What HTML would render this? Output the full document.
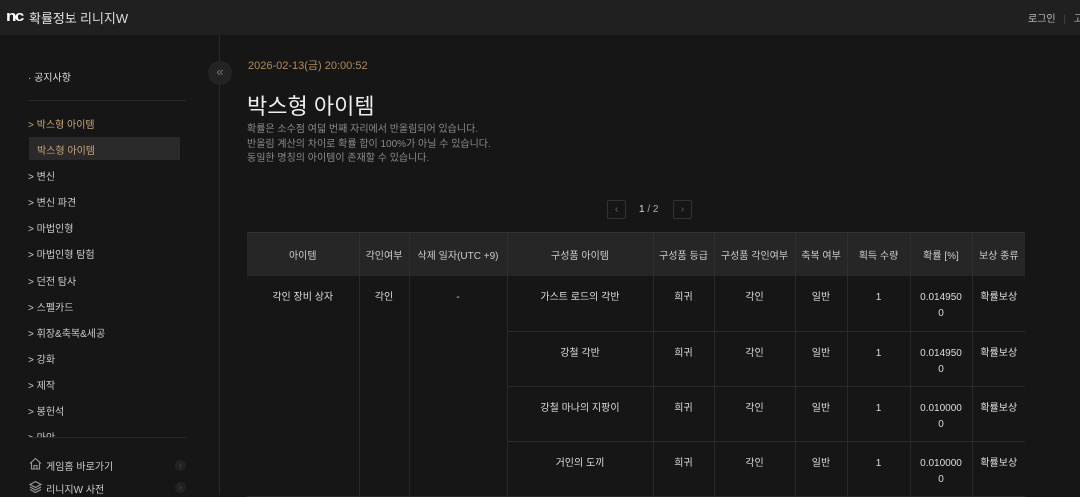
<!DOCTYPE html>
<html><head><meta charset="utf-8">
<style>
*{margin:0;padding:0;box-sizing:border-box}
body{width:1080px;height:495px;overflow:hidden;background:#161616;font-family:"Liberation Sans","Noto Sans CJK KR",sans-serif;color:#ccc;position:relative}
.top{position:absolute;left:0;top:0;width:1080px;height:35px;background:#202020}
.logo{position:absolute;left:6px;top:9px;font-weight:bold;font-size:15px;color:#fff;letter-spacing:-1.5px;line-height:15px;font-family:"Liberation Sans",sans-serif;transform:scaleX(1.15);transform-origin:left}
.t1{position:absolute;left:29px;top:8px;font-size:13px;color:#e6e6e6;white-space:nowrap}
.sep{position:absolute;left:74px;top:12px;width:1px;height:10px;background:#555}
.t2{position:absolute;left:80px;top:8px;font-size:13px;color:#ddd;white-space:nowrap}
.login{position:absolute;left:1028px;top:10px;font-size:10px;color:#bbb;white-space:nowrap}
.side{position:absolute;left:0;top:35px;width:220px;height:460px;border-right:1px solid #2a2a2a}
.side .it{position:absolute;left:28px;font-size:10px;color:#ccc;white-space:nowrap}
.side .hl{color:#c9a47a}
.sel{position:absolute;left:29px;top:102px;width:151px;height:23px;background:#2a2a2a;color:#c9a47a;font-size:10px;padding:5px 0 0 8px}
.hr{position:absolute;left:29px;width:157px;height:1px;background:#2a2a2a}
.coll{position:absolute;left:208px;top:61px;width:24px;height:24px;border-radius:50%;background:#232323;color:#777;font-size:13px;text-align:center;line-height:22px}
.date{position:absolute;left:248px;top:57px;font-size:11px;color:#b08a60}
h1{position:absolute;left:247px;top:89px;font-size:22px;font-weight:normal;color:#eee}
.note{position:absolute;left:247px;top:123px;font-size:10px;line-height:14.5px;color:#8a8a8a}
.pg{position:absolute;top:200px;width:19px;height:19px;border:1px solid #333;border-radius:2px;color:#666;font-size:10px;text-align:center;line-height:17px}
.pn{position:absolute;left:639px;top:204px;font-size:10px;color:#aaa}
table{position:absolute;left:247px;top:233px;border-collapse:collapse;font-size:10px;color:#ddd;table-layout:fixed}
th{background:#262626;height:43px;font-weight:normal;color:#ccc;border-left:1px solid #2e2e2e}
td{height:55px;text-align:center;vertical-align:top;padding-top:14px;border-left:1px solid #2a2a2a;border-bottom:1px solid #2a2a2a;line-height:16px}
th:first-child,td.f{border-left:none}
.tl{position:absolute;left:247px;top:232px;width:778px;height:2px;background:#333}
</style></head><body>
<div class="top">
<div class="logo">nc</div><div class="t1">확률정보</div><div class="sep"></div><div class="t2">리니지W</div>
<div class="login">로그인 <span style="color:#444;margin:0 5px">|</span> 고객</div>
</div>
<div class="side">
<div class="it" style="top:34px;color:#ddd">· 공지사항</div>
<div class="hr" style="top:65px"></div>
<div class="it hl" style="top:81px">&gt; 박스형 아이템</div>
<div class="sel">박스형 아이템</div>
<div class="it" style="top:133px">&gt; 변신</div>
<div class="it" style="top:159px">&gt; 변신 파견</div>
<div class="it" style="top:185px">&gt; 마법인형</div>
<div class="it" style="top:211px">&gt; 마법인형 탐험</div>
<div class="it" style="top:238px">&gt; 던전 탐사</div>
<div class="it" style="top:264px">&gt; 스펠카드</div>
<div class="it" style="top:290px">&gt; 휘장&amp;축복&amp;세공</div>
<div class="it" style="top:316px">&gt; 강화</div>
<div class="it" style="top:342px">&gt; 제작</div>
<div class="it" style="top:368px">&gt; 봉헌석</div>
<div class="it" style="top:394px;height:9px;overflow:hidden">&gt; 마안</div>
<div class="hr" style="top:402px"></div>
<svg style="position:absolute;left:29px;top:422px" width="13" height="13" viewBox="0 0 13 13" fill="none" stroke="#999" stroke-width="1.1"><path d="M1 6.5L6.5 1.5L12 6.5M2.5 5.5V12H10.5V5.5M5 12V8.5H8V12"/></svg>
<div class="it" style="top:423px;left:46px">게임홈 바로가기</div>
<div style="position:absolute;left:175px;top:425px;width:11px;height:11px;border-radius:50%;background:#222;color:#555;font-size:8px;text-align:center;line-height:11px">›</div>
<svg style="position:absolute;left:29px;top:445px" width="13" height="13" viewBox="0 0 13 13" fill="none" stroke="#999" stroke-width="1.1"><path d="M1 4.5L6.5 1.5L12 4.5L6.5 7.5Z M1 7L6.5 10L12 7 M1 9.5L6.5 12.5L12 9.5"/></svg>
<div class="it" style="top:446px;left:46px">리니지W 사전</div>
<div style="position:absolute;left:175px;top:447px;width:11px;height:11px;border-radius:50%;background:#222;color:#555;font-size:8px;text-align:center;line-height:11px">›</div>
</div>
<div class="coll">«</div>
<div class="date">2026-02-13(금) 20:00:52</div>
<h1>박스형 아이템</h1>
<div class="note">확률은 소수점 여덟 번째 자리에서 반올림되어 있습니다.<br>반올림 계산의 차이로 확률 합이 100%가 아닐 수 있습니다.<br>동일한 명칭의 아이템이 존재할 수 있습니다.</div>
<div class="pg" style="left:607px">‹</div>
<div class="pn"><b style="color:#ddd;font-weight:normal">1</b> / 2</div>
<div class="pg" style="left:673px">›</div>
<div class="tl"></div>
<table>
<colgroup><col style="width:112px"><col style="width:50px"><col style="width:98px"><col style="width:146px"><col style="width:61px"><col style="width:81px"><col style="width:52px"><col style="width:63px"><col style="width:62px"><col style="width:53px"></colgroup>
<tr><th>아이템</th><th>각인여부</th><th>삭제 일자(UTC +9)</th><th>구성품 아이템</th><th>구성품 등급</th><th>구성품 각인여부</th><th>축복 여부</th><th>획득 수량</th><th>확률 [%]</th><th>보상 종류</th></tr>
<tr><td class="f" rowspan="4">각인 장비 상자</td><td rowspan="4">각인</td><td rowspan="4">-</td><td>가스트 로드의 각반</td><td>희귀</td><td>각인</td><td>일반</td><td>1</td><td>0.014950<br>0</td><td>확률보상</td></tr>
<tr><td>강철 각반</td><td>희귀</td><td>각인</td><td>일반</td><td>1</td><td>0.014950<br>0</td><td>확률보상</td></tr>
<tr><td>강철 마나의 지팡이</td><td>희귀</td><td>각인</td><td>일반</td><td>1</td><td>0.010000<br>0</td><td>확률보상</td></tr>
<tr><td>거인의 도끼</td><td>희귀</td><td>각인</td><td>일반</td><td>1</td><td>0.010000<br>0</td><td>확률보상</td></tr>
</table>
</body></html>
